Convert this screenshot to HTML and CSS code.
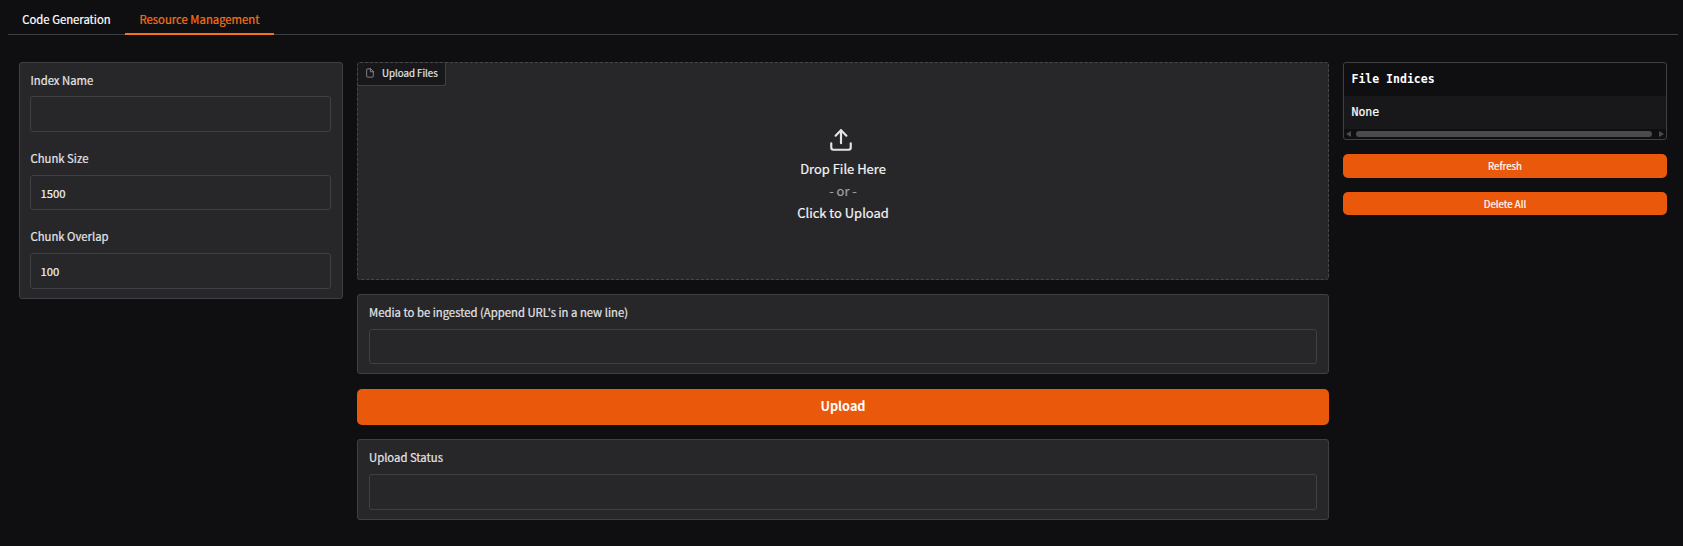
FILE: index.html
```html
<!DOCTYPE html>
<html lang="en">
<head>
<meta charset="utf-8">
<title>Resource Management</title>
<link rel="stylesheet" href="styles.css">
</head>
<body>
<nav class="tabs">
  <button class="tab">Code Generation</button>
  <button class="tab active">Resource Management</button>
</nav>
<main class="columns">
  <section class="panel settings">
    <label class="field"><span class="label">Index Name</span><input class="input tall" type="text"></label>
    <label class="field"><span class="label">Chunk Size</span><input class="input" type="text" value="1500"></label>
    <label class="field"><span class="label">Chunk Overlap</span><input class="input tall" type="text" value="100"></label>
  </section>
  <section class="center">
    <div class="dropzone">
      <div class="badge">
        <svg class="file-icon" viewBox="0 0 24 24"><path d="M13 2H6a2 2 0 0 0-2 2v16a2 2 0 0 0 2 2h12a2 2 0 0 0 2-2V9z"/><path d="M13 2v7h7"/></svg>
        <span>Upload Files</span>
      </div>
      <svg class="upload-icon" viewBox="0 0 24 24"><path d="M21 15v4a2 2 0 0 1-2 2H5a2 2 0 0 1-2-2v-4"/><path d="M17 8l-5-5-5 5"/><path d="M12 3v12"/></svg>
      <span>Drop File Here</span>
      <span class="or">- or -</span>
      <span>Click to Upload</span>
    </div>
    <div class="panel media">
      <label class="field"><span class="label">Media to be ingested (Append URL's in a new line)</span><input class="input" type="text"></label>
    </div>
    <button class="btn large">Upload</button>
    <div class="panel status">
      <label class="field"><span class="label">Upload Status</span><input class="input tall" type="text"></label>
    </div>
  </section>
  <aside class="side">
    <div class="table">
      <div class="head">File Indices</div>
      <div class="cell">None</div>
      <div class="scrollbar">
        <svg class="arrow" viewBox="0 0 5 6"><path d="M5 0v6L0 3z"/></svg>
        <div class="thumb"></div>
        <svg class="arrow" viewBox="0 0 5 6"><path d="M0 0v6l5-3z"/></svg>
      </div>
    </div>
    <button class="btn refresh">Refresh</button>
    <button class="btn delete">Delete All</button>
  </aside>
</main>
</body>
</html>
```
FILE: styles.css
```css
* { box-sizing: border-box; }
body {
  margin: 0;
  height: 546px;
  overflow: hidden;
  background: #0f0f11;
  color: #f4f4f5;
  font-family: "Noto Sans CJK SC", "Noto Sans", sans-serif;
  font-size: 11.3px;
  -webkit-text-stroke: 0.2px currentColor;
}
button, input { font: inherit; color: inherit; }
.tabs {
  display: flex;
  height: 35px;
  margin: 0 5px 0 8px;
  border-bottom: 1px solid #3f3f46;
}
.tab {
  height: 35px;
  padding: 5px 14px 0;
  border: 0;
  border-bottom: 2px solid transparent;
  background: none;
  line-height: 28px;
  white-space: nowrap;
}
.tab:first-child { width: 117px; color: #fff; }
.tab.active { width: 149px; color: #f97316; border-bottom-color: #f97316; }
.columns {
  display: grid;
  grid-template-columns: 324px 972px 324px;
  gap: 14px;
  align-items: start;
  padding: 27px 0 0 19px;
}
.panel {
  border: 1px solid #3f3f46;
  border-radius: 3px;
  background: #27272a;
}
.settings {
  display: flex;
  flex-direction: column;
  gap: 17px;
  height: 237px;
  padding: 7px 11px 0 10px;
}
.media, .status { padding: 7px 11px 0; }
.media { height: 80px; margin-top: 14px; }
.status { height: 81px; margin-top: 14px; }
.field { display: block; }
.label {
  display: block;
  height: 26px;
  line-height: 21px;
  color: #e4e4e7;
}
.settings .label { padding-left: 0.5px; }
.settings .field:nth-child(n+2) .label { line-height: 19px; }
.media .label, .status .label { height: 27px; }
.input {
  display: block;
  width: 100%;
  height: 35px;
  padding: 1px 9.5px 0;
  border: 1px solid #3f3f46;
  border-radius: 3px;
  background: #27272a;
}
.input.tall { height: 36px; padding-top: 0; }
.center, .side { display: flex; flex-direction: column; }
.dropzone {
  position: relative;
  display: flex;
  flex-direction: column;
  align-items: center;
  height: 218px;
  padding-top: 64px;
  border: 1px dashed #46464c;
  border-radius: 3px;
  background: #27272a;
  font-size: 12.95px;
  line-height: 22px;
}
.badge {
  position: absolute;
  top: 0;
  left: 0;
  display: flex;
  align-items: center;
  gap: 7px;
  width: 88px;
  height: 23px;
  padding: 0 0 2px 7px;
  border: solid #3f3f46;
  border-width: 0 1px 1px 0;
  border-radius: 2px 0 3px 0;
  background: #18181b;
  color: #e4e4e7;
  font-size: 9.7px;
  white-space: nowrap;
}
.file-icon, .upload-icon {
  fill: none;
  stroke: currentColor;
  stroke-linecap: round;
  stroke-linejoin: round;
}
.file-icon { width: 10px; height: 10px; color: #a1a1aa; stroke-width: 1.8; }
.upload-icon { width: 26px; height: 26px; margin: 0 4px 5px 0; color: #e4e4e7; stroke-width: 2; }
.or { color: #a1a1aa; }
.btn {
  padding: 0;
  border: 0;
  border-radius: 5px;
  background: #ea580c;
  color: #fff;
  font-size: 9.7px;
  line-height: 20px;
}
.btn.large { height: 36px; margin-top: 15px; padding-bottom: 2px; font-size: 12.7px; font-weight: 700; -webkit-text-stroke: 0; }
.refresh { height: 24px; margin-top: 14px; }
.delete { height: 23px; margin-top: 14px; }
.table {
  display: flex;
  flex-direction: column;
  height: 78px;
  border: 1px solid #3f3f46;
  border-radius: 3px;
  overflow: hidden;
  font: 11.5px/33px "DejaVu Sans Mono", monospace;
  color: #fff;
}
.head, .cell { height: 33px; padding-left: 7.5px; }
.head { font-weight: 700; -webkit-text-stroke: 0; }
.cell { background: #18181b; }
.scrollbar {
  display: flex;
  align-items: center;
  height: 10px;
  padding: 0 2px;
}
.thumb { width: 296px; height: 6px; margin: 0 7px 0 5px; border-radius: 3px; background: #4b4b4b; }
.arrow { width: 5px; height: 6px; fill: #4b4b4b; }
```
